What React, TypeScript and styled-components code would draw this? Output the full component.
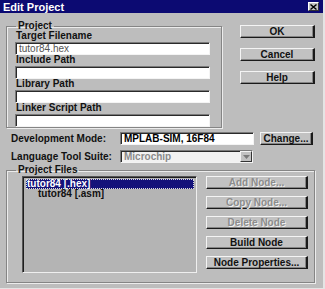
import styled, { createGlobalStyle } from "styled-components";

const GlobalStyle = createGlobalStyle`
  html, body {
    margin: 0;
    padding: 0;
    background: #bcbcbc;
  }
  * {
    box-sizing: border-box;
  }
`;

const Window = styled.div`
  width: 325px;
  height: 289px;
  background: #bdbdbd;
  font-family: "Liberation Sans", Arial, sans-serif;
  font-size: 10px;
  font-weight: bold;
  color: #111;
  display: flex;
  flex-direction: column;
  border-right: 2px solid #e4e4e4;
  border-bottom: 1px solid #e4e4e4;
  overflow: hidden;
`;

const TitleBar = styled.div`
  height: 13px;
  background: #0c0a72;
  color: #fff;
  font-size: 11px;
  display: flex;
  align-items: center;
  justify-content: space-between;
  padding: 0 4px 0 3px;
`;

const CloseButton = styled.div`
  width: 11px;
  height: 9px;
  background: #c4c4c4;
  border-top: 1px solid #fff;
  border-left: 1px solid #fff;
  border-right: 1px solid #333;
  border-bottom: 1px solid #333;
  display: flex;
  align-items: center;
  justify-content: center;
`;

const Body = styled.div`
  flex: 1;
  padding: 8px 8px 0 6px;
  display: flex;
  flex-direction: column;
`;

const TopRow = styled.div`
  display: flex;
  align-items: flex-start;
`;

const Group = styled.fieldset<{ $width: number; $height: number }>`
  margin: 0;
  width: ${({ $width }) => $width}px;
  height: ${({ $height }) => $height}px;
  border: 1px solid #858585;
  box-shadow: 1px 1px 0 #ececec, inset 1px 1px 0 #ececec;
  padding: 0;
  display: flex;
  flex-direction: column;
`;

const Legend = styled.legend`
  margin-left: 9px;
  padding: 0 2px;
  line-height: 10px;
  font-size: 10px;
`;

const ProjectFields = styled.div`
  padding: 0 11px 0 8px;
  display: flex;
  flex-direction: column;
`;

const FieldLabel = styled.div`
  height: 11px;
  line-height: 10px;
  padding-left: 1px;
`;

const TextBox = styled.div<{ $bold?: boolean; $width?: number }>`
  height: 13px;
  width: ${({ $width }) => ($width ? `${$width}px` : "100%")};
  background: #fff;
  border-top: 1px solid #7a7a7a;
  border-left: 1px solid #7a7a7a;
  border-right: 1px solid #f4f4f4;
  border-bottom: 1px solid #f4f4f4;
  box-shadow: inset 1px 1px 0 #2a2a2a;
  padding: 0 3px;
  line-height: 11px;
  font-weight: ${({ $bold }) => ($bold ? "bold" : "normal")};
  color: ${({ $bold }) => ($bold ? "#000" : "#555")};
  white-space: nowrap;
`;

const ButtonColumn = styled.div`
  margin-left: 18px;
  margin-top: 4px;
  display: flex;
  flex-direction: column;
  gap: 10px;
`;

const Button = styled.div<{ $width: number; $disabled?: boolean }>`
  width: ${({ $width }) => $width}px;
  height: 13px;
  background: #c2c2c2;
  border-top: 1px solid #f4f4f4;
  border-left: 1px solid #f4f4f4;
  border-right: 2px solid #1a1a1a;
  border-bottom: 1px solid #1a1a1a;
  box-shadow: inset -1px -1px 0 #858585;
  display: flex;
  align-items: center;
  justify-content: center;
  line-height: 10px;
  color: ${({ $disabled }) => ($disabled ? "#8c8c8c" : "#111")};
  text-shadow: ${({ $disabled }) => ($disabled ? "1px 1px 0 #f0f0f0" : "none")};
  white-space: nowrap;
`;

const ModeRow = styled.div<{ $top: number }>`
  display: flex;
  align-items: center;
  margin-top: ${({ $top }) => $top}px;
  padding-left: 5px;
`;

const ModeLabel = styled.div`
  width: 109px;
`;

const Combo = styled.div`
  width: 133px;
  height: 13px;
  background: #f2f2f2;
  border-top: 1px solid #7a7a7a;
  border-left: 1px solid #7a7a7a;
  border-right: 1px solid #f4f4f4;
  border-bottom: 1px solid #f4f4f4;
  box-shadow: inset 1px 1px 0 #2a2a2a;
  display: flex;
  align-items: center;
  justify-content: space-between;
  padding-left: 3px;
  color: #8a8a8a;
`;

const ComboArrow = styled.div`
  width: 12px;
  height: 11px;
  background: #c2c2c2;
  border-top: 1px solid #f4f4f4;
  border-left: 1px solid #f4f4f4;
  border-right: 1px solid #333;
  border-bottom: 1px solid #333;
  display: flex;
  align-items: center;
  justify-content: center;
`;

const FilesBody = styled.div`
  display: flex;
  padding: 1px 0 0 15px;
  gap: 9px;
`;

const ListBox = styled.div`
  width: 175px;
  height: 97px;
  background: #b4b4b4;
  border-top: 1px solid #555;
  border-left: 1px solid #555;
  border-right: 1px solid #efefef;
  border-bottom: 1px solid #efefef;
  box-shadow: inset 1px 1px 0 #1e1e1e;
  padding: 2px 2px 0 3px;
  display: flex;
  flex-direction: column;
`;

const ListItem = styled.div<{ $selected?: boolean; $indent?: number }>`
  height: 10px;
  line-height: 10px;
  padding-left: ${({ $indent }) => $indent ?? 1}px;
  background: ${({ $selected }) => ($selected ? "#14127a" : "transparent")};
  color: ${({ $selected }) => ($selected ? "#fff" : "#111")};
  outline: ${({ $selected }) => ($selected ? "1px dotted #ddd" : "none")};
  outline-offset: -1px;
`;

const NodeButtons = styled.div`
  display: flex;
  flex-direction: column;
  gap: 7px;
`;

export default function App() {
  return (
    <>
      <GlobalStyle />
      <Window>
        <TitleBar>
          <span>Edit Project</span>
          <CloseButton>
            <svg width="7" height="6" viewBox="0 0 7 6">
              <path d="M0.5 0.5 L6.5 5.5 M6.5 0.5 L0.5 5.5" stroke="#000" strokeWidth="1.4" />
            </svg>
          </CloseButton>
        </TitleBar>

        <Body>
          <TopRow>
            <Group $width={217} $height={107}>
              <Legend>Project</Legend>
              <ProjectFields>
                <FieldLabel>Target Filename</FieldLabel>
                <TextBox>tutor84.hex</TextBox>
                <FieldLabel>Include Path</FieldLabel>
                <TextBox />
                <FieldLabel>Library Path</FieldLabel>
                <TextBox />
                <FieldLabel>Linker Script Path</FieldLabel>
                <TextBox />
              </ProjectFields>
            </Group>

            <ButtonColumn>
              <Button $width={75}>OK</Button>
              <Button $width={75}>Cancel</Button>
              <Button $width={75}>Help</Button>
            </ButtonColumn>
          </TopRow>

          <ModeRow $top={4}>
            <ModeLabel>Development Mode:</ModeLabel>
            <TextBox $bold $width={134}>MPLAB-SIM, 16F84</TextBox>
            <Button $width={53} style={{ marginLeft: 6 }}>
              Change...
            </Button>
          </ModeRow>

          <ModeRow $top={5}>
            <ModeLabel>Language Tool Suite:</ModeLabel>
            <Combo>
              <span>Microchip</span>
              <ComboArrow>
                <svg width="7" height="4" viewBox="0 0 7 4">
                  <path d="M0 0 H7 L3.5 4 Z" fill="#7a7a7a" />
                </svg>
              </ComboArrow>
            </Combo>
          </ModeRow>

          <Group $width={309} $height={118} style={{ marginTop: 2 }}>
            <Legend>Project Files</Legend>
            <FilesBody>
              <ListBox>
                <ListItem $selected>tutor84 [.hex]</ListItem>
                <ListItem $indent={12}>tutor84 [.asm]</ListItem>
              </ListBox>
              <NodeButtons>
                <Button $width={102} $disabled>Add Node...</Button>
                <Button $width={102} $disabled>Copy Node...</Button>
                <Button $width={102} $disabled>Delete Node</Button>
                <Button $width={102}>Build Node</Button>
                <Button $width={102}>Node Properties...</Button>
              </NodeButtons>
            </FilesBody>
          </Group>
        </Body>
      </Window>
    </>
  );
}
